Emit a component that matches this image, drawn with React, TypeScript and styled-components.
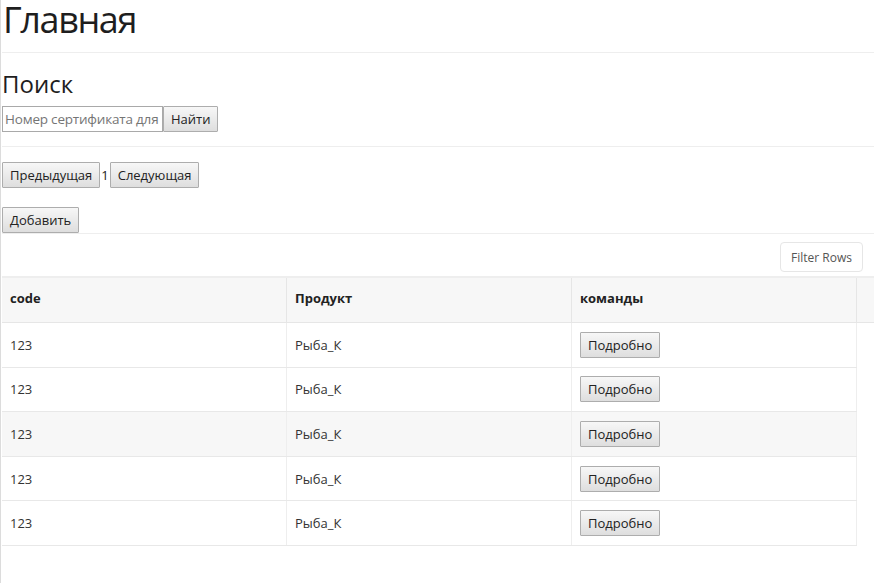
import React from "react";
import styled, { createGlobalStyle } from "styled-components";

const GlobalStyle = createGlobalStyle`
  html, body {
    margin: 0;
    padding: 0;
    background: #fff;
  }
  body {
    font-family: "Segoe UI", "Open Sans", "Noto Sans", sans-serif;
    color: #222;
  }
`;

const Page = styled.div`
  min-height: 583px;
  border-left: 1px solid #dcdcdc;
  padding-left: 1px;
  box-sizing: border-box;
`;

const Title = styled.h1`
  margin: 0;
  padding-left: 1px;
  font-size: 36px;
  font-weight: 500;
  letter-spacing: -1.4px;
  line-height: 40px;
  color: #1e1e1e;
`;

const Rule = styled.hr<{ $top: number; $bottom: number }>`
  border: 0;
  border-top: 1px solid #eee;
  margin: ${(p) => p.$top}px 0 ${(p) => p.$bottom}px;
`;

const Subtitle = styled.h2`
  margin: 0;
  font-size: 24px;
  font-weight: 500;
  line-height: 30px;
  color: #1e1e1e;
`;

const SearchForm = styled.form`
  display: flex;
  margin-top: 7px;
`;

const SearchInput = styled.input`
  box-sizing: border-box;
  width: 161px;
  height: 26px;
  margin: 0;
  padding: 0 2px;
  border: 1px solid #a9a9a9;
  font-family: inherit;
  font-size: 13.5px;
  letter-spacing: -0.2px;
  color: #222;
  outline: none;
  &::placeholder {
    color: #757575;
  }
`;

const LegacyButton = styled.button`
  box-sizing: border-box;
  height: 26px;
  margin: 0;
  padding: 0 7px;
  border: 1px solid #adadad;
  border-radius: 1px;
  background: linear-gradient(#f7f7f7, #dedede);
  font-family: inherit;
  font-size: 13px;
  color: #222;
  white-space: nowrap;
  cursor: pointer;
`;

const Pager = styled.div`
  display: flex;
  align-items: center;
`;

const PageNumber = styled.span`
  padding: 0 1px;
  font-size: 13px;
  color: #222;
`;

const AddRow = styled.div`
  margin-top: 19px;
  border-bottom: 1px solid #eee;
`;

const Toolbar = styled.div`
  display: flex;
  justify-content: flex-end;
  padding: 8px 11px 4px 0;
  border-bottom: 2px solid #eee;
`;

const FilterButton = styled.button`
  box-sizing: border-box;
  height: 30px;
  padding: 0 10px;
  border: 1px solid #e6e6e6;
  border-radius: 4px;
  background: #fff;
  font-family: inherit;
  font-size: 12px;
  color: #555;
`;

const HeaderRow = styled.div`
  display: grid;
  grid-template-columns: 285px 285px 285px 1fr;
  background: #f7f7f7;
  border-bottom: 1px solid #e6e6e6;
`;

const HeaderCell = styled.div`
  display: flex;
  align-items: center;
  box-sizing: border-box;
  height: 44px;
  padding: 0 0 4px 8px;
  border-right: 1px solid #e6e6e6;
  font-size: 13px;
  font-weight: 700;
  color: #222;
  &:last-child {
    border-right: 0;
  }
`;

const BodyRow = styled.div<{ $shaded?: boolean }>`
  display: grid;
  grid-template-columns: 285px 285px 285px;
  width: 855px;
  background: ${(p) => (p.$shaded ? "#f7f7f7" : "#fff")};
  border-bottom: 1px solid #e8e8e8;
`;

const Cell = styled.div`
  display: flex;
  align-items: center;
  height: 43.6px;
  padding-left: 8px;
  border-right: 1px solid #eee;
  font-size: 13px;
  color: #333;
`;

const rows = [
  { code: "123", product: "Рыба_К" },
  { code: "123", product: "Рыба_К" },
  { code: "123", product: "Рыба_К" },
  { code: "123", product: "Рыба_К" },
  { code: "123", product: "Рыба_К" },
];

export default function App() {
  return (
    <>
      <GlobalStyle />
      <Page>
        <Title>Главная</Title>
        <Rule $top={12} $bottom={16} />
        <Subtitle>Поиск</Subtitle>
        <SearchForm onSubmit={(e) => e.preventDefault()}>
          <SearchInput placeholder="Номер сертификата для поиска" />
          <LegacyButton type="submit">Найти</LegacyButton>
        </SearchForm>
        <Rule $top={14} $bottom={15} />
        <Pager>
          <LegacyButton>Предыдущая</LegacyButton>
          <PageNumber>1</PageNumber>
          <LegacyButton>Следующая</LegacyButton>
        </Pager>
        <AddRow>
          <LegacyButton>Добавить</LegacyButton>
        </AddRow>
        <Toolbar>
          <FilterButton>Filter Rows</FilterButton>
        </Toolbar>
        <HeaderRow>
          <HeaderCell>code</HeaderCell>
          <HeaderCell>Продукт</HeaderCell>
          <HeaderCell>команды</HeaderCell>
          <HeaderCell />
        </HeaderRow>
        {rows.map((r, i) => (
          <BodyRow key={i} $shaded={i === 2}>
            <Cell>{r.code}</Cell>
            <Cell>{r.product}</Cell>
            <Cell>
              <LegacyButton>Подробно</LegacyButton>
            </Cell>
          </BodyRow>
        ))}
      </Page>
    </>
  );
}
